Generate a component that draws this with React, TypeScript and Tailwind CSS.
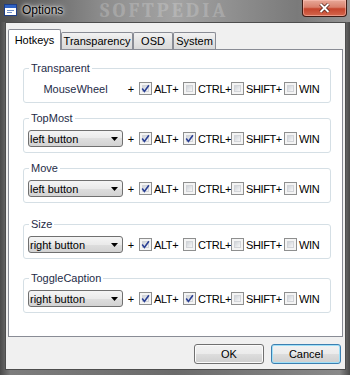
const groups = [
  { title: "Transparent", select: null, label: "MouseWheel", alt: true, ctrl: false, gap: "" },
  { title: "TopMost", select: "left button", label: "", alt: true, ctrl: true, gap: "mt-[8px]" },
  { title: "Move", select: "left button", label: "", alt: true, ctrl: false, gap: "mt-[8px]" },
  { title: "Size", select: "right button", label: "", alt: true, ctrl: false, gap: "mt-[14px]" },
  { title: "ToggleCaption", select: "right button", label: "", alt: true, ctrl: true, gap: "mt-[12px]" },
];

function Check({ on }: { on: boolean }) {
  return (
    <span className="relative h-[13px] w-[13px] shrink-0 border border-[#8e8f8f] bg-[#f4f4f4]">
      <span className="absolute inset-[2px] border border-[#d2d4d8] bg-[linear-gradient(135deg,#cfd3d8,#f6f6f7)]" />
      {on && (
        <svg className="absolute inset-0" width="11" height="11" viewBox="0 0 11 11">
          <path d="M2.2 5.6 L4.4 8.4 L8.9 2.2" fill="none" stroke="#2a3f94" strokeWidth="1.6" />
        </svg>
      )}
    </span>
  );
}

function Modifier({ on, label, w }: { on: boolean; label: string; w: string }) {
  return (
    <div className="flex items-center">
      <Check on={on} />
      <span className={`${w} pl-[2px] tracking-[-0.4px]`}>{label}</span>
    </div>
  );
}

export default function App() {
  return (
    <div
      className="relative flex h-[375px] w-[350px] flex-col overflow-hidden bg-[linear-gradient(90deg,#4a4a4a,#7d7d7d_3%,#6b6b6b_50%,#8a8a8a_97%,#4a4a4a)] text-[11px] leading-[14px] text-black"
      style={{ fontFamily: '"Liberation Sans", Arial, sans-serif' }}
    >
      {/* title bar */}
      <div className="relative flex h-[22px] shrink-0 items-start bg-[linear-gradient(90deg,#4d4d4d_0%,#6a6a6a_12%,#8e8e8e_30%,#a3a3a3_50%,#8b8b8b_70%,#7a7a7a_85%,#959595_100%)]">
        <span className="pointer-events-none absolute left-[100px] top-[1px] font-serif text-[20px] font-bold leading-[20px] tracking-[3px] text-white/20">
          SOFTPEDIA
        </span>
        <svg className="ml-[4px] mt-[4px]" width="13" height="12" viewBox="0 0 13 12">
          <rect x="0.5" y="0.5" width="12" height="11" fill="#fff" stroke="#1f3e86" />
          <rect x="1" y="1" width="11" height="3" fill="#2f62c4" />
          <rect x="3" y="6" width="7" height="1" fill="#6f8fc9" />
          <rect x="3" y="8" width="5" height="1" fill="#6f8fc9" />
        </svg>
        <span className="relative ml-[5px] mt-[3px] text-[12px] leading-[15px] [text-shadow:0_0_6px_#fff,0_0_3px_#fff]">
          Options
        </span>
        <div className="relative ml-auto mr-[3px] flex h-[17px] w-[45px] items-center justify-center rounded-b-[4px] border border-t-0 border-[#3f1b14] bg-[linear-gradient(#e7a898_0%,#d9806c_45%,#c5442c_55%,#d4684e_100%)] shadow-[inset_0_0_0_1px_rgba(255,200,190,0.5)]">
          <svg width="11" height="10" viewBox="0 0 11 10">
            <path d="M1.5 1 L9.5 9 M9.5 1 L1.5 9" stroke="#4a1a10" strokeWidth="3.4" />
            <path d="M1.5 1 L9.5 9 M9.5 1 L1.5 9" stroke="#fff" strokeWidth="2" />
          </svg>
        </div>
      </div>

      {/* client */}
      <div className="mx-[5px] mb-[5px] mr-[4px] flex flex-1 flex-col border border-[#4d4d4d] bg-[#f0f0f0] px-[2px] pt-[6px] pb-[5px]">
        <div className="flex h-[20px] items-end">
          <div className="relative z-10 mb-[-1px] flex h-[21px] w-[53px] items-center justify-center rounded-t-[2px] border border-b-0 border-[#898c95] bg-white pb-[1px]">
            Hotkeys
          </div>
          {[
            ["Transparency", "ml-0 w-[72px]"],
            ["OSD", "w-[40px]"],
            ["System", "w-[43px]"],
          ].map(([t, w]) => (
            <div
              key={t}
              className={`${w} flex h-[17px] items-center justify-center rounded-t-[2px] border border-b-0 border-[#898c95] bg-[linear-gradient(#f2f2f2,#e4e4e4_50%,#d9d9d9)]`}
            >
              {t}
            </div>
          ))}
        </div>

        <div className="flex h-[288px] flex-col border border-[#898c95] bg-white pl-[14px] pr-[11px] pt-[11px]">
          {groups.map((g) => (
            <fieldset
              key={g.title}
              className={`${g.gap} rounded-[3px] border border-[#d5dfe5] pb-[5px] pl-[4px] pt-[5px]`}
            >
              <legend className="ml-[1px] px-[2px] leading-[14px] text-[#1e2c48]">{g.title}</legend>
              <div className="flex h-[17px] items-center">
                {g.select ? (
                  <div className="flex h-[17px] w-[95px] items-center justify-between rounded-[3px] border border-[#707070] bg-[linear-gradient(#f4f4f4_0%,#eaeaea_50%,#dedede_50%,#d2d2d2_100%)] pl-[1px] pr-[4px]">
                    <span>{g.select}</span>
                    <svg width="7" height="4" viewBox="0 0 7 4">
                      <path d="M0 0 H7 L3.5 4 Z" fill="#000" />
                    </svg>
                  </div>
                ) : (
                  <div className="w-[95px] text-center text-[#1e2c48]">{g.label}</div>
                )}
                <span className="w-[16px] text-center">+</span>
                <Modifier on={g.alt} label="ALT+" w="w-[31px]" />
                <Modifier on={g.ctrl} label="CTRL+" w="w-[35px]" />
                <Modifier on={false} label="SHIFT+" w="w-[40px]" />
                <Modifier on={false} label="WIN" w="w-[22px]" />
              </div>
            </fieldset>
          ))}
        </div>

        <div className="mt-[7px] flex justify-end gap-[7px] pr-[2px]">
          <button className="h-[20px] w-[70px] rounded-[3px] border border-[#707070] bg-[linear-gradient(#f2f2f2_0%,#ebebeb_50%,#dddddd_50%,#cfcfcf_100%)] shadow-[inset_0_0_0_1px_#fbfbfb]">
            OK
          </button>
          <button className="h-[20px] w-[70px] rounded-[3px] border border-[#3c7fb1] bg-[linear-gradient(#f2f2f2_0%,#ebebeb_50%,#dddddd_50%,#cfcfcf_100%)] shadow-[inset_0_0_0_1px_#9fe0f8]">
            Cancel
          </button>
        </div>
      </div>
    </div>
  );
}
